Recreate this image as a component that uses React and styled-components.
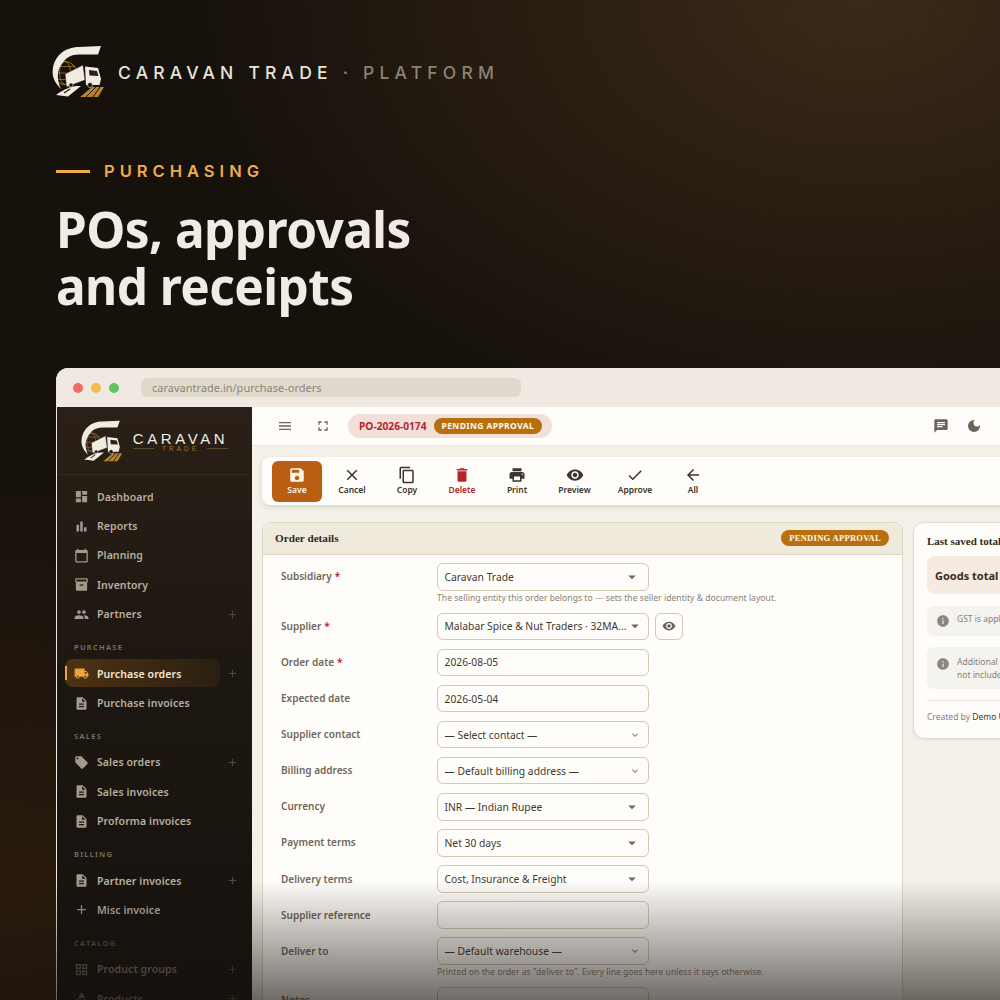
import React from 'react';
import styled, { createGlobalStyle } from 'styled-components';
import {
  MdDashboard, MdBarChart, MdCalendarToday, MdInventory2, MdPeople, MdLocalShipping,
  MdDescription, MdLocalOffer, MdAdd, MdOutlineGridView, MdCategory, MdMenu, MdFullscreen,
  MdSave, MdClose, MdContentCopy, MdDelete, MdPrint, MdVisibility, MdCheck, MdArrowBack,
  MdChat, MdDarkMode, MdInfo, MdExpandMore, MdArrowDropDown, MdSettings,
} from 'react-icons/md';

const GlobalStyle = createGlobalStyle`
  html, body { margin: 0; padding: 0; background: #17110c; }
  * { box-sizing: border-box; }
`;

const Page = styled.div`
  position: relative;
  width: 1000px;
  height: 1000px;
  overflow: hidden;
  padding: 45px 0 0 56px;
  display: flex;
  flex-direction: column;
  font-family: 'Noto Sans', sans-serif;
  background:
    radial-gradient(660px 440px at 86% 0%, #3a2a17 0%, rgba(58, 42, 23, 0) 100%),
    radial-gradient(420px 520px at 0% 100%, #2e1d0f 0%, rgba(46, 29, 15, 0) 100%),
    #17110c;
`;

const Fade = styled.div`
  position: absolute;
  left: 0;
  right: 0;
  bottom: 0;
  height: 120px;
  background: linear-gradient(to bottom, rgba(23, 17, 12, 0), rgba(23, 17, 12, 0.62));
  pointer-events: none;
`;

const Brand = styled.div`
  display: flex;
  align-items: center;
  gap: 13px;
  margin-left: -4px;
  height: 53px;
`;

const BrandText = styled.div`
  margin-top: 1px;
  font-family: 'Inter', sans-serif;
  font-size: 17.5px;
  font-weight: 500;
  letter-spacing: 5.2px;
  color: #e9e3d8;
  white-space: nowrap;
`;

const BrandMuted = styled.span`
  color: #8a8377;
`;

const Eyebrow = styled.div`
  display: flex;
  align-items: center;
  gap: 14px;
  margin-top: 62px;
  height: 22px;
`;

const EyebrowLine = styled.div`
  width: 34px;
  height: 3px;
  background: #eeac4b;
`;

const EyebrowText = styled.div`
  font-family: 'Inter', sans-serif;
  font-size: 16.5px;
  font-weight: 600;
  letter-spacing: 5px;
  color: #eeac4b;
`;

const Heading = styled.h1`
  margin: 19px 0 0;
  font-family: 'Noto Sans', sans-serif;
  font-size: 49.5px;
  font-weight: 700;
  line-height: 57px;
  letter-spacing: -0.55px;
  color: #f1ece2;
`;

const Window = styled.div`
  width: 1120px;
  margin-top: 53px;
  flex: 1;
  min-height: 0;
  display: flex;
  flex-direction: column;
  border-radius: 12px 0 0 0;
  overflow: hidden;
  background: #f4f1e8;
  border-left: 1px solid #efe9e1;
`;

const TitleBar = styled.div`
  height: 39px;
  flex: none;
  display: flex;
  align-items: center;
  gap: 8px;
  padding-left: 16px;
  background: #efe9e1;
`;

const Dot = styled.span`
  width: 10px;
  height: 10px;
  border-radius: 50%;
  background: ${(p) => p.$color};
`;

const UrlBar = styled.div`
  width: 380px;
  height: 19px;
  margin-left: 14px;
  padding-left: 11px;
  border-radius: 6px;
  background: #e0dacd;
  font-size: 11px;
  line-height: 19px;
  color: #8d8578;
`;

const Body = styled.div`
  flex: 1;
  min-height: 0;
  display: flex;
`;

const Sidebar = styled.aside`
  width: 195px;
  flex: none;
  background: linear-gradient(to bottom, #2a2017 0%, #1d1711 45%, #16110d 100%);
  overflow: hidden;
`;

const SideLogo = styled.div`
  height: 68px;
  display: flex;
  align-items: center;
  gap: 10px;
  padding: 0 0 0 24px;
  border-bottom: 1px solid #32281e;
`;

const Wordmark = styled.div`
  display: flex;
  flex-direction: column;
  align-items: center;
  width: 95px;
  margin-top: 2px;
`;

const WordTop = styled.div`
  font-family: 'Liberation Sans', sans-serif;
  font-size: 15px;
  line-height: 15px;
  letter-spacing: 3.6px;
  color: #f1ece2;
  white-space: nowrap;
`;

const WordSub = styled.div`
  display: flex;
  align-items: center;
  gap: 8px;
  width: 100%;
  margin-top: -1px;
  font-family: 'Liberation Sans', sans-serif;
  font-size: 6.5px;
  line-height: 8px;
  letter-spacing: 3px;
  color: #a0782f;
  &::before, &::after {
    content: '';
    flex: 1;
    height: 1px;
    background: #5b4a2c;
  }
`;

const Nav = styled.nav`
  padding-top: 7px;
`;

const Item = styled.div`
  position: relative;
  height: 29.4px;
  display: flex;
  align-items: center;
  padding-left: 17px;
  font-size: 10.5px;
  font-weight: 600;
  letter-spacing: 0.1px;
  color: ${(p) => (p.$dim ? '#7a7264' : p.$active ? '#f6e7cd' : '#b8af9f')};
  & > svg:first-child {
    width: 15px;
    height: 15px;
    flex: none;
    margin-right: 8px;
    color: ${(p) => (p.$dim ? '#6d665a' : p.$active ? '#eea23e' : '#a39a8a')};
  }
`;

const ActiveBg = styled.div`
  position: absolute;
  left: 8px;
  top: 0.5px;
  width: 155px;
  height: 28px;
  border-radius: 8px;
  background: linear-gradient(to right, #4f3214, #2a1f13);
  &::before {
    content: '';
    position: absolute;
    left: 0;
    top: 7px;
    width: 2px;
    height: 14px;
    background: #eea23e;
  }
`;

const ItemLabel = styled.span`
  position: relative;
`;

const IconSlot = styled.span`
  position: relative;
  width: 15px;
  height: 15px;
  margin-right: 8px;
`;

const PlusMark = styled(MdAdd)`
  position: absolute;
  left: 169px;
  top: 8px;
  width: 13px;
  height: 13px;
  color: #4f483d;
`;

const GroupLabel = styled.div`
  height: 30px;
  padding: 12px 0 0 17px;
  font-size: 7.5px;
  line-height: 12px;
  font-weight: 600;
  letter-spacing: 1.3px;
  color: ${(p) => (p.$dim ? '#5f584c' : '#7d7566')};
`;

const Main = styled.main`
  flex: 1;
  min-width: 0;
  display: flex;
  flex-direction: column;
`;

const TopBar = styled.header`
  height: 39px;
  flex: none;
  display: flex;
  align-items: center;
  padding-left: 25px;
  background: #fffdf9;
  border-bottom: 1px solid #ece7dc;
  color: #6b6458;
`;

const TopIcon = styled.span`
  display: flex;
  width: 16px;
  margin-right: ${(p) => p.$gap || 0}px;
  & svg { width: 16px; height: 16px; }
`;

const PoPill = styled.div`
  display: flex;
  align-items: center;
  gap: 7px;
  height: 24px;
  padding: 0 10px 0 11px;
  margin-right: 381px;
  border-radius: 12px;
  background: #f3dfd9;
  font-size: 10.2px;
  font-weight: 700;
  color: #b3262e;
`;

const StatusBadge = styled.span`
  height: 16px;
  padding: 0 8px;
  border-radius: 8px;
  background: #b8700f;
  font-family: ${(p) => (p.$serif ? "'Liberation Serif', serif" : "'Noto Sans', sans-serif")};
  font-size: 8.5px;
  font-weight: 700;
  line-height: 16px;
  letter-spacing: ${(p) => (p.$serif ? '0.3px' : '0.4px')};
  color: #fff8ea;
  white-space: nowrap;
`;

const Content = styled.div`
  flex: 1;
  min-height: 0;
  padding: 11px 0 0 10px;
`;

const Toolbar = styled.div`
  height: 48px;
  display: flex;
  align-items: center;
  padding-left: 10px;
  border-radius: 8px;
  background: #fffdf9;
  box-shadow: 0 2px 5px rgba(90, 75, 50, 0.16);
`;

const ToolButton = styled.div`
  width: ${(p) => p.$w}px;
  height: 41px;
  flex: none;
  display: flex;
  flex-direction: column;
  align-items: center;
  justify-content: center;
  border-radius: 6px;
  font-size: 8.5px;
  font-weight: 600;
  line-height: 12px;
  background: ${(p) => (p.$primary ? '#b85f14' : 'transparent')};
  color: ${(p) => (p.$primary ? '#fff6e8' : p.$danger ? '#b3262e' : '#3a352d')};
  & svg { width: 18px; height: 18px; }
`;

const Columns = styled.div`
  display: flex;
  align-items: flex-start;
  gap: 10px;
  margin-top: 17px;
`;

const FormCard = styled.section`
  width: 641px;
  flex: none;
  border: 1px solid #ddd5c5;
  border-radius: 9px 9px 0 0;
  background: #fffdf9;
`;

const CardHead = styled.div`
  height: 32px;
  display: flex;
  align-items: center;
  justify-content: space-between;
  padding: 0 13px 1px 12px;
  border-bottom: 1px solid #ddd5c5;
  border-radius: 9px 9px 0 0;
  background: #f0eadd;
`;

const CardTitle = styled.div`
  margin-bottom: 1px;
  font-family: 'Liberation Serif', serif;
  font-size: 11.2px;
  font-weight: 700;
  color: #2f2a22;
`;

const Form = styled.div`
  padding: 8px 0 0 18px;
`;

const Row = styled.div`
  display: grid;
  grid-template-columns: 156px 1fr;
  margin-bottom: 8.6px;
`;

const Label = styled.label`
  height: 27.5px;
  display: flex;
  align-items: center;
  gap: 3px;
  padding-bottom: 1px;
  font-size: 10px;
  font-weight: 600;
  color: #6f675a;
`;

const Req = styled.span`
  color: #b3262e;
`;

const FieldRow = styled.div`
  display: flex;
  gap: 6px;
`;

const Field = styled.div`
  width: 212px;
  height: 27.5px;
  display: flex;
  align-items: center;
  justify-content: space-between;
  padding: 0 7px 0 6.5px;
  border: 1px solid #d3c9b4;
  border-radius: 6px;
  background: #fffdf9;
  font-size: 10.3px;
  color: #3f3a31;
  white-space: nowrap;
  & svg { flex: none; color: ${(p) => (p.$chev ? '#8a8378' : '#6b6458')}; }
`;

const EyeButton = styled.div`
  width: 28px;
  height: 27.5px;
  display: flex;
  align-items: center;
  justify-content: center;
  border: 1px solid #d3c9b4;
  border-radius: 6px;
  color: #6b6458;
`;

const Help = styled.div`
  margin-top: 2px;
  margin-bottom: 0.5px;
  font-size: 8.63px;
  line-height: 11px;
  color: #8a8378;
  white-space: nowrap;
`;

const SideCard = styled.section`
  width: 300px;
  flex: none;
  height: 217px;
  padding: 11px 13px 0;
  border: 1px solid #e4ddcf;
  border-radius: 11px;
  background: #fffdf9;
  box-shadow: 0 1px 3px rgba(90, 75, 50, 0.1);
`;

const SideTitle = styled(CardTitle)`
  font-size: 11px;
  line-height: 14px;
`;

const TotalBox = styled.div`
  height: 38px;
  margin-top: 8px;
  padding-left: 8px;
  display: flex;
  align-items: center;
  border-radius: 8px;
  background: #f6ebe0;
  font-size: 11px;
  font-weight: 700;
  color: #3a2c20;
`;

const Note = styled.div`
  display: flex;
  gap: 7px;
  margin-top: ${(p) => p.$top}px;
  padding: ${(p) => p.$pad}px 0 ${(p) => p.$pad}px 9px;
  min-height: 30px;
  border-radius: 7px;
  background: #f5f3ee;
  font-size: 8.5px;
  line-height: 13px;
  color: #85807a;
  white-space: pre-line;
  & svg { flex: none; width: 14px; height: 14px; margin-top: 2px; color: #8b867d; }
`;

const Meta = styled.div`
  margin-top: 11px;
  padding-top: 9px;
  border-top: 1px solid #e8e3d9;
  font-size: 8.5px;
  line-height: 13px;
  color: #85807a;
`;

const MetaStrong = styled.span`
  color: #3f3a31;
`;

function TruckLogo({ size }) {
  return (
    <svg width={size} height={size} viewBox="0 0 53 53" fill="none" style={{ flex: 'none' }}>
      <circle cx="13" cy="28" r="11.5" stroke="#b9822d" strokeWidth="0.9" />
      <ellipse cx="13" cy="28" rx="5.5" ry="11.5" stroke="#b9822d" strokeWidth="0.7" />
      <path d="M1.5 28h23M3.5 21.5h19M3.5 34.5h19" stroke="#b9822d" strokeWidth="0.7" />
      <path d="M49 1 L46 9.5 L27 9.5 C18 9.5 12 14 8 22 C5 27 5 36 9 44 C3 38 0 32 0.7 25 C2 11 13 2 27 2 Z" fill="#f1ece2" />
      <path d="M13 29 L31 20 L33 35 L14.5 42 Z" fill="#f1ece2" stroke="#17110c" strokeWidth="0.5" />
      <path d="M33 21.5 L46 23 L49 34 L47.5 40 L34 40 Z" fill="#f1ece2" />
      <path d="M37 25 L45 26 L46.5 31 L37.5 30.5 Z" fill="#2a2017" />
      <circle cx="19" cy="40" r="2.1" fill="#17110c" stroke="#f1ece2" strokeWidth="0.6" />
      <circle cx="38" cy="40" r="2.5" fill="#17110c" stroke="#f1ece2" strokeWidth="0.6" />
      <path d="M4 50 Q13 43 24 41 L29 41 L16 51.5 Z" fill="#f1ece2" />
      <path d="M12 48 L18 44" stroke="#17110c" strokeWidth="1.2" />
      <path d="M28 52 L40 42 L52 42 L46 52 Z" fill="#b9822d" />
      <path d="M34 52 L44 42 M41 52 L48 42" stroke="#17110c" strokeWidth="1" />
    </svg>
  );
}

const navTop = [
  { icon: MdDashboard, label: 'Dashboard' },
  { icon: MdBarChart, label: 'Reports' },
  { icon: MdCalendarToday, label: 'Planning' },
  { icon: MdInventory2, label: 'Inventory' },
  { icon: MdPeople, label: 'Partners', plus: true },
];

const navGroups = [
  {
    title: 'PURCHASE',
    items: [
      { icon: MdLocalShipping, label: 'Purchase orders', plus: true, active: true },
      { icon: MdDescription, label: 'Purchase invoices' },
    ],
  },
  {
    title: 'SALES',
    items: [
      { icon: MdLocalOffer, label: 'Sales orders', plus: true },
      { icon: MdDescription, label: 'Sales invoices' },
      { icon: MdDescription, label: 'Proforma invoices' },
    ],
  },
  {
    title: 'BILLING',
    items: [
      { icon: MdDescription, label: 'Partner invoices', plus: true },
      { icon: MdAdd, label: 'Misc invoice' },
    ],
  },
  {
    title: 'CATALOG',
    dim: true,
    items: [
      { icon: MdOutlineGridView, label: 'Product groups', plus: true },
      { icon: MdCategory, label: 'Products', plus: true },
    ],
  },
];

const tools = [
  { icon: MdSave, label: 'Save', w: 50, primary: true },
  { icon: MdClose, label: 'Cancel', w: 60 },
  { icon: MdContentCopy, label: 'Copy', w: 50 },
  { icon: MdDelete, label: 'Delete', w: 60, danger: true },
  { icon: MdPrint, label: 'Print', w: 50 },
  { icon: MdVisibility, label: 'Preview', w: 65 },
  { icon: MdCheck, label: 'Approve', w: 56 },
  { icon: MdArrowBack, label: 'All', w: 60 },
];

const fields = [
  { label: 'Subsidiary', req: true, value: 'Caravan Trade', kind: 'drop', help: 'The selling entity this order belongs to — sets the seller identity & document layout.' },
  { label: 'Supplier', req: true, value: 'Malabar Spice & Nut Traders · 32MA...', kind: 'drop', eye: true },
  { label: 'Order date', req: true, value: '2026-08-05' },
  { label: 'Expected date', value: '2026-05-04' },
  { label: 'Supplier contact', value: '— Select contact —', kind: 'chev' },
  { label: 'Billing address', value: '— Default billing address —', kind: 'chev' },
  { label: 'Currency', value: 'INR — Indian Rupee', kind: 'drop' },
  { label: 'Payment terms', value: 'Net 30 days', kind: 'drop' },
  { label: 'Delivery terms', value: 'Cost, Insurance & Freight', kind: 'drop' },
  { label: 'Supplier reference', value: '' },
  { label: 'Deliver to', value: '— Default warehouse —', kind: 'chev', help: 'Printed on the order as "deliver to". Every line goes here unless it says otherwise.' },
  { label: 'Notes', value: '' },
];

function NavItem({ item, dim }) {
  const Icon = item.icon;
  return (
    <Item $active={item.active} $dim={dim}>
      {item.active && <ActiveBg />}
      {item.active ? <IconSlot><Icon size={15} color="#eea23e" /></IconSlot> : <Icon />}
      <ItemLabel>{item.label}</ItemLabel>
      {item.plus && <PlusMark />}
    </Item>
  );
}

export default function App() {
  return (
    <Page>
      <GlobalStyle />
      <Brand>
        <TruckLogo size={53} />
        <BrandText>CARAVAN TRADE <BrandMuted>· PLATFORM</BrandMuted></BrandText>
      </Brand>
      <Eyebrow>
        <EyebrowLine />
        <EyebrowText>PURCHASING</EyebrowText>
      </Eyebrow>
      <Heading>POs, approvals<br />and receipts</Heading>

      <Window>
        <TitleBar>
          <Dot $color="#f26a63" />
          <Dot $color="#f5bd4f" />
          <Dot $color="#5fc466" />
          <UrlBar>caravantrade.in/purchase-orders</UrlBar>
        </TitleBar>
        <Body>
          <Sidebar>
            <SideLogo>
              <TruckLogo size={42} />
              <Wordmark>
                <WordTop>CARAVAN</WordTop>
                <WordSub>TRADE</WordSub>
              </Wordmark>
            </SideLogo>
            <Nav>
              {navTop.map((item) => <NavItem key={item.label} item={item} />)}
              {navGroups.map((group) => (
                <div key={group.title}>
                  <GroupLabel $dim={group.dim}>{group.title}</GroupLabel>
                  {group.items.map((item) => <NavItem key={item.label} item={item} dim={group.dim} />)}
                </div>
              ))}
            </Nav>
          </Sidebar>
          <Main>
            <TopBar>
              <TopIcon $gap={22}><MdMenu /></TopIcon>
              <TopIcon $gap={17}><MdFullscreen /></TopIcon>
              <PoPill>
                PO-2026-0174
                <StatusBadge>PENDING APPROVAL</StatusBadge>
              </PoPill>
              <TopIcon $gap={17}><MdChat /></TopIcon>
              <TopIcon $gap={17}><MdDarkMode /></TopIcon>
              <TopIcon><MdSettings /></TopIcon>
            </TopBar>
            <Content>
              <Toolbar>
                {tools.map((tool) => {
                  const Icon = tool.icon;
                  return (
                    <ToolButton key={tool.label} $w={tool.w} $primary={tool.primary} $danger={tool.danger}>
                      <Icon />
                      {tool.label}
                    </ToolButton>
                  );
                })}
              </Toolbar>
              <Columns>
                <FormCard>
                  <CardHead>
                    <CardTitle>Order details</CardTitle>
                    <StatusBadge $serif>PENDING APPROVAL</StatusBadge>
                  </CardHead>
                  <Form>
                    {fields.map((f) => (
                      <Row key={f.label}>
                        <Label>{f.label}{f.req && <Req>*</Req>}</Label>
                        <div>
                          <FieldRow>
                            <Field $chev={f.kind === 'chev'}>
                              {f.value}
                              {f.kind === 'drop' && <MdArrowDropDown size={18} />}
                              {f.kind === 'chev' && <MdExpandMore size={12} />}
                            </Field>
                            {f.eye && <EyeButton><MdVisibility size={14} /></EyeButton>}
                          </FieldRow>
                          {f.help && <Help>{f.help}</Help>}
                        </div>
                      </Row>
                    ))}
                  </Form>
                </FormCard>
                <SideCard>
                  <SideTitle>Last saved totals</SideTitle>
                  <TotalBox>Goods total</TotalBox>
                  <Note $top={12} $pad={6}><MdInfo />GST is applied per line on the order</Note>
                  <Note $top={11} $pad={8}><MdInfo />{'Additional charges and discounts are\nnot included in the goods total'}</Note>
                  <Meta>Created by <MetaStrong>Demo User</MetaStrong></Meta>
                </SideCard>
              </Columns>
            </Content>
          </Main>
        </Body>
      </Window>
      <Fade />
    </Page>
  );
}
